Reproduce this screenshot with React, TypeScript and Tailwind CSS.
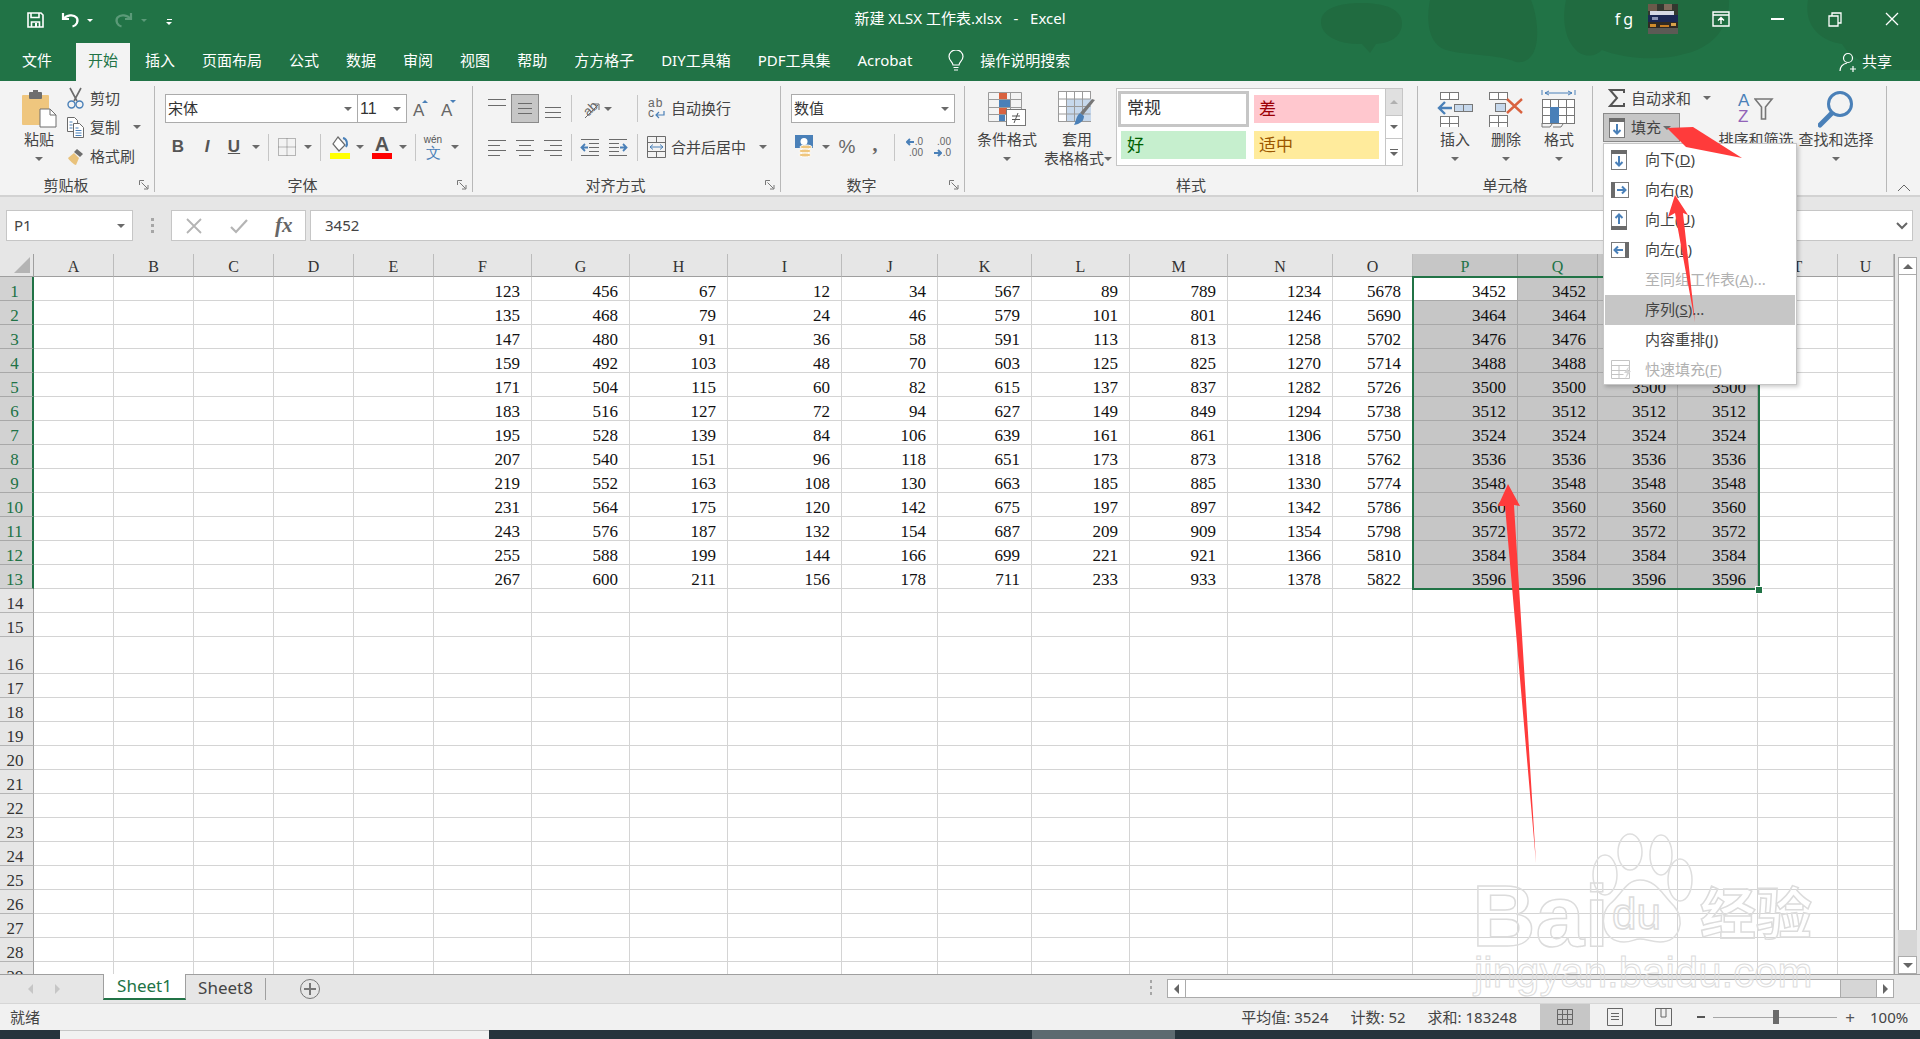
import type { ReactNode } from 'react'

const gridCols =
  'grid grid-cols-[34px_80px_80px_80px_80px_80px_98px_98px_98px_114px_96px_94px_98px_98px_105px_80px_105px_80px_80px_80px_80px_56px]'
const letters = 'ABCDEFGHIJKLMNOPQRSTU'.split('')
const bases = [123, 456, 67, 12, 34, 567, 89, 789, 1234, 5678, 3452, 3452, 3452, 3452]
const rows = Array.from({ length: 29 }, (_, i) => i + 1)
const tabs = ['插入', '页面布局', '公式', '数据', '审阅', '视图', '帮助', '方方格子', 'DIY工具箱', 'PDF工具集', 'Acrobat']

const blue = '#4a80b8'
const gray = '#6b6b6b'

function Caret({ className = '' }: { className?: string }) {
  return <div className={`w-[8px] flex justify-center shrink-0 ${className}`}><div className="w-0 h-0 border-x-[4px] border-t-[4px] border-x-transparent border-t-[#6a6a6a]" /></div>
}

function Sep({ className = '' }: { className?: string }) {
  return <div className={`w-px h-[27px] bg-[#c6c6c6] shrink-0 ${className}`} />
}

function Group({ width, label, launcher, children }: { width: string; label?: string; launcher?: boolean; children: ReactNode }) {
  return (
    <div className={`${width} h-[106px] mt-[5px] shrink-0 border-r border-[#b8b8b8] flex flex-col`}>
      <div className="h-[91px] shrink-0">{children}</div>
      <div className="flex items-center h-[16px] text-[15px] leading-[16px]">
        <span className="flex-1 text-center">{label}</span>
        {launcher && (
          <div className="w-[22px] flex justify-end pr-[5px]">
            <svg width="10" height="10" viewBox="0 0 10 10" fill="none" stroke="#777">
              <path d="M.5 5V.5H5M2.5 2.5l6 6M9 5v4H5" />
            </svg>
          </div>
        )}
      </div>
    </div>
  )
}

function LargeButton({ width, className = '', icon, label, caret = true }: { width: string; className?: string; icon: ReactNode; label: string; caret?: boolean }) {
  return (
    <div className={`${width} ${className} flex flex-col items-center shrink-0`}>
      <div className="h-[37px] mt-[4px] flex items-center justify-center">{icon}</div>
      <div className="mt-[2px] h-[20px] leading-[20px] text-[15px] whitespace-nowrap">{label}</div>
      {caret && <Caret className="mt-[8px]" />}
    </div>
  )
}

function Lines({ l, h = 29 }: { l: number[][]; h?: number }) {
  return (
    <svg width="20" height={h} viewBox={`0 0 20 ${h}`} stroke={gray} className="shrink-0">
      {l.map((p, i) => <path key={i} d={`M${p[0]} ${p[2]}.5H${p[1]}`} />)}
    </svg>
  )
}

function Blobs({ className }: { className: string }) {
  return (
    <svg width="640" height="81" viewBox="0 0 640 81" fill="#206b40" className={`absolute right-0 ${className}`}>
      <path d="M41 22C41 8 60 3 82 3s40 6 40 20-12 20-26 21l-6 9-8-9c-22 1-41-8-41-22z" />
      <path d="M150 0c-4 20-2 44 16 50 22 6 52 4 70 12 12 2 20-8 21-24 1-14-2-28-6-38z" />
      <path d="M286 0c-4 18-2 40 12 52 10 6 18 4 24-2 20 8 56 12 82 4 28-6 46-26 45-54z" />
      <path d="M528 0c-4 24 10 40 34 44 10 16 30 24 50 26h28V0z" />
    </svg>
  )
}

function Save() {
  return (
    <svg width="17" height="16" viewBox="0 0 17 16" fill="none" stroke="#fff" strokeWidth="1.6">
      <path d="M1 1h13l2 2v12H1z" />
      <path d="M4 1v4.500h8V1" />
      <path d="M4.500 15v-5h8v5" />
      <path d="M9 11v4" strokeWidth="2" />
    </svg>
  )
}

function Undo({ faded }: { faded?: boolean }) {
  return (
    <svg width="20" height="18" viewBox="0 0 20 18" fill="none" stroke={faded ? '#5b9a78' : '#fff'} strokeWidth="2.2" className={faded ? '-scale-x-100' : ''}>
      <path d="M2 2v6h6" />
      <path d="M2.500 8c3-4 10-5 13-1.500 2.500 3.500 0 8-4 9" />
    </svg>
  )
}

function Paste() {
  return (
    <svg width="36" height="38" viewBox="0 0 36 38">
      <rect x="1" y="5" width="27" height="30" rx="1" fill="#efc67e" />
      <rect x="8" y="2" width="13" height="7" rx="1" fill="#6e6e6e" />
      <rect x="12" y="0" width="5" height="4" fill="#6e6e6e" />
      <path d="M19 19h10l6 6v12H19z" fill="#fff" stroke="#6e6e6e" />
      <path d="M29 19v6h6" fill="none" stroke="#6e6e6e" />
    </svg>
  )
}

function Scissors() {
  return (
    <svg width="17" height="22" viewBox="0 0 17 22" fill="none">
      <path d="M3 1l7 13M14 1L7 14" stroke="#6b6b6b" strokeWidth="1.6" />
      <circle cx="4.500" cy="17.500" r="3.500" stroke={blue} strokeWidth="1.400" />
      <circle cx="12.500" cy="17.500" r="3.500" stroke={blue} strokeWidth="1.400" />
    </svg>
  )
}

function CopyIcon() {
  return (
    <svg width="17" height="21" viewBox="0 0 17 21" fill="#fff" stroke="#6b6b6b">
      <path d="M.5.500h7l3 3v11H.500z" />
      <path d="M6.500 6.500h6l4 4v10h-10z" />
      <path d="M2.500 5h3M2.500 8h3M2.500 11h3M8.500 11h3M8.500 13.500h6M8.500 16h6M8.500 18.500h6" stroke={blue} />
    </svg>
  )
}

function Brush() {
  return (
    <svg width="18" height="19" viewBox="0 0 18 19">
      <path d="M10 2l6 5-3 3-6-5z" fill="#6e6e6e" />
      <path d="M7 6l5 5-3 7c-2 0-7-5-8-7z" fill="#e9c27b" />
    </svg>
  )
}

function AGrow({ down }: { down?: boolean }) {
  return (
    <div className="flex items-start w-[20px] h-[20px]">
      <span className="text-[17px] leading-[20px] font-['Liberation_Sans',sans-serif] text-[#666] ml-[2px] mt-[2px]">A</span>
      <div className={down ? 'w-0 h-0 border-x-[3px] border-t-[3px] border-x-transparent border-t-[#4a80b8] mt-[1px] -ml-[2px]' : 'w-0 h-0 border-x-[3px] border-b-[3px] border-x-transparent border-b-[#4a80b8] mt-[1px] -ml-[2px]'} />
    </div>
  )
}

function BorderIcon() {
  return (
    <svg width="18" height="18" viewBox="0 0 18 18" fill="none" stroke="#777" strokeDasharray="1 1">
      <path d="M.5.500h17v17H.500zM9 .500v17M.500 9h17" />
    </svg>
  )
}

function FillIcon() {
  return (
    <svg width="22" height="24" viewBox="0 0 22 24">
      <path d="M9 2l7 8-6 6-6-7z" fill="#fff" stroke="#6b6b6b" strokeWidth="1.200" />
      <path d="M14 3c4 1 5 6 3 9" fill="none" stroke={blue} strokeWidth="2" />
      <rect x="1" y="18" width="20" height="6" fill="#ffff00" />
    </svg>
  )
}

function FontColor() {
  return (
    <div className="flex flex-col items-center w-[22px]">
      <span className="text-[20px] leading-[18px] font-['Liberation_Sans',sans-serif] font-bold text-[#555]">A</span>
      <div className="w-[20px] h-[6px] bg-[#ff0000]" />
    </div>
  )
}

function Wen() {
  return (
    <div className="flex flex-col items-center w-[24px] leading-none">
      <span className="text-[10px] text-[#555] leading-[10px]">wén</span>
      <span className="text-[15px] text-[#4a80b8] leading-[15px]">文</span>
    </div>
  )
}

function Orientation() {
  return (
    <div className="w-[22px] h-[24px] relative flex items-center justify-center">
      <span className="text-[13px] text-[#666] -rotate-45 font-['Liberation_Sans',sans-serif] leading-none">ab</span>
      <svg width="22" height="24" viewBox="0 0 22 24" fill="none" stroke={gray} className="absolute inset-0"><path d="M6 21L19 8M14 7h6v6" /></svg>
    </div>
  )
}

function WrapIcon() {
  return (
    <div className="w-[17px] h-[22px] relative leading-[10px] text-[12px] text-[#666] font-['Liberation_Sans',sans-serif]">
      <div className="tracking-[1px]">ab</div>
      <div>c</div>
      <svg width="10" height="8" viewBox="0 0 10 8" fill="none" stroke={blue} strokeWidth="1.200" className="absolute right-0 bottom-[1px]"><path d="M9 0v4H1M4 1L1 4l3 3" /></svg>
    </div>
  )
}

function MergeIcon() {
  return (
    <svg width="19" height="22" viewBox="0 0 19 22" fill="none" stroke={gray}>
      <path d="M.5.500h18v21H.500zM.500 6.500h18M.500 15.500h18M9.500.500v6M9.500 15.500v6" />
      <path d="M3 11h13M6 8.500L3 11l3 2.500M13 8.500l3 2.500-3 2.500" stroke={blue} />
    </svg>
  )
}

function Indent({ flip }: { flip?: boolean }) {
  return (
    <svg width="20" height="20" viewBox="0 0 20 20" fill="none" className={flip ? '-scale-x-100' : ''}>
      <path d="M1 2.500h18M9 6.500h10M9 10.500h10M9 14.500h10M1 18.500h18" stroke={gray} />
      <path d="M8 10.500H2M5 7l-3.500 3.500L5 14" stroke={blue} strokeWidth="1.800" />
    </svg>
  )
}

function Accounting() {
  return (
    <svg width="18" height="24" viewBox="0 0 18 24">
      <rect x="0" y="0" width="18" height="13" fill={blue} />
      <circle cx="9" cy="6.500" r="3.500" fill="#fff" />
      <ellipse cx="11" cy="12" rx="6" ry="2" fill="#efc67e" stroke="#fff" />
      <ellipse cx="10" cy="16" rx="6" ry="2" fill="#efc67e" stroke="#fff" />
      <ellipse cx="10" cy="20" rx="6" ry="2" fill="#efc67e" stroke="#fff" />
    </svg>
  )
}

function Decimal({ more }: { more?: boolean }) {
  const top = more ? '.00' : '.0'
  const bottom = more ? '.0' : '.00'
  return (
    <div className="w-[20px] text-[10px] leading-[11px] text-[#666] font-['Liberation_Sans',sans-serif]">
      <div className="flex justify-end items-center gap-[1px]">
        {!more && <svg width="8" height="8" viewBox="0 0 8 8" fill="none" stroke={blue} strokeWidth="2"><path d="M8 4H1M4 1L1 4l3 3" /></svg>}
        {top}
      </div>
      <div className="flex justify-end items-center gap-[1px]">
        {more && <svg width="8" height="8" viewBox="0 0 8 8" fill="none" stroke={blue} strokeWidth="2"><path d="M0 4h7M4 1l3 3-3 3" /></svg>}
        {bottom}
      </div>
    </div>
  )
}

function CondFormat() {
  return (
    <svg width="38" height="34" viewBox="0 0 38 34" fill="none">
      <path d="M.5.500h33v29H.500zM.500 7.500h33M.500 15.500h33M.500 22.500h33M11.500.500v29M22.500.500v29" stroke="#9a9a9a" />
      <rect x="11" y="1" width="8" height="6" fill="#d9623f" />
      <rect x="11" y="8" width="11" height="7" fill={blue} />
      <rect x="11" y="16" width="8" height="6" fill="#d9623f" />
      <rect x="11" y="23" width="6" height="6" fill={blue} />
      <rect x="18.500" y="17.500" width="19" height="16" fill="#fff" stroke="#777" />
      <path d="M24 24h8M24 27.500h8M30 21l-4 10" stroke="#555" />
    </svg>
  )
}

function TableFormat() {
  return (
    <svg width="38" height="36" viewBox="0 0 38 36" fill="none">
      <rect x=".5" y=".5" width="32" height="30" fill="#fff" stroke="#9a9a9a" />
      <rect x="8" y="8" width="25" height="22" fill="#c6d8ec" />
      <path d="M.500 8h32M.500 15.500h32M.500 23h32M8.500.500v30M16.500.500v30M24.500.500v30" stroke="#9a9a9a" />
      <path d="M37 9l-12 15-3-2 12-14z" fill="#777" />
      <path d="M22 22l4 3c0 5-4 8-10 9 2-3 2-9 6-12z" fill={blue} />
    </svg>
  )
}

function Cells({ x, y, c = 2, r = 2, w = 9, h = 7 }: { x: number; y: number; c?: number; r?: number; w?: number; h?: number }) {
  const parts = []
  for (let i = 0; i < c; i++) for (let j = 0; j < r; j++) parts.push(<rect key={`${i}-${j}`} x={x + i * w + 0.5} y={y + j * h + 0.5} width={w} height={h} fill="#fff" stroke="#777" />)
  return <>{parts}</>
}

function InsertIcon() {
  return (
    <svg width="37" height="36" viewBox="0 0 37 36" fill="none">
      <Cells x={3} y={1} r={1} />
      <Cells x={3} y={25} />
      <rect x="17.500" y="13.500" width="9" height="7" fill="#c6d8ec" stroke="#777" />
      <rect x="26.500" y="13.500" width="9" height="7" fill="#c6d8ec" stroke="#777" />
      <path d="M15 17H2M8 11l-6 6 6 6" stroke={blue} strokeWidth="2.400" />
    </svg>
  )
}

function DeleteIcon() {
  return (
    <svg width="37" height="36" viewBox="0 0 37 36" fill="none">
      <Cells x={1} y={1} r={1} />
      <Cells x={1} y={24} />
      <rect x="7.500" y="12.500" width="10" height="8" fill="#c6d8ec" stroke="#777" />
      <path d="M19 8l15 14M34 8L19 22" stroke="#d9623f" strokeWidth="2.400" />
    </svg>
  )
}

function FormatIcon() {
  return (
    <svg width="36" height="38" viewBox="0 0 36 38" fill="none">
      <path d="M1 0v5M34 0v5M4 3h27M8 1L4 3l4 2M27 1l4 2-4 2" stroke={blue} />
      <Cells x={1} y={9} c={4} r={3} w={8} h={8} />
      <rect x="9" y="17" width="9" height="16" fill={blue} />
      <path d="M1 33v4h8l2-3M12 37h8l2-3" stroke="#777" />
    </svg>
  )
}

function Sigma() {
  return (
    <svg width="17" height="18" viewBox="0 0 17 18" fill="none" stroke="#555" strokeWidth="2">
      <path d="M16 4V1H2l7 8-7 8h14v-3" />
    </svg>
  )
}

function FillArrow({ dir }: { dir: 'down' | 'right' | 'up' | 'left' }) {
  if (dir === 'down') return (
    <svg width="16" height="20" viewBox="0 0 16 20" fill="#fff"><rect x=".5" y=".5" width="15" height="19" stroke="#7a7a7a" /><rect width="16" height="4" fill="#6b6b6b" /><path d="M8 6v10M4.500 12L8 15.500l3.500-3.500" fill="none" stroke={blue} strokeWidth="2" /></svg>
  )
  if (dir === 'up') return (
    <svg width="16" height="20" viewBox="0 0 16 20" fill="#fff"><rect x=".5" y=".5" width="15" height="19" stroke="#7a7a7a" /><rect y="16" width="16" height="4" fill="#6b6b6b" /><path d="M8 14V4M4.500 8L8 4.500 11.500 8" fill="none" stroke={blue} strokeWidth="2" /></svg>
  )
  if (dir === 'right') return (
    <svg width="18" height="16" viewBox="0 0 18 16" fill="#fff"><rect x=".5" y=".5" width="17" height="15" stroke="#7a7a7a" /><rect width="4" height="16" fill="#6b6b6b" /><path d="M6 8h9M11 4.500L14.500 8 11 11.500" fill="none" stroke={blue} strokeWidth="2" /></svg>
  )
  return (
    <svg width="18" height="16" viewBox="0 0 18 16" fill="#fff"><rect x=".5" y=".5" width="17" height="15" stroke="#7a7a7a" /><rect x="14" width="4" height="16" fill="#6b6b6b" /><path d="M12 8H3M7 4.500L3.500 8 7 11.500" fill="none" stroke={blue} strokeWidth="2" /></svg>
  )
}

function SortIcon() {
  return (
    <div className="flex w-[36px] h-[34px] items-center">
      <div className="w-[14px] font-['Liberation_Sans',sans-serif] text-[17px] leading-[16px]">
        <div className="text-[#4a80b8]">A</div>
        <div className="text-[#9163b8]">Z</div>
      </div>
      <svg width="20" height="22" viewBox="0 0 20 22" fill="none" stroke="#777" strokeWidth="1.600" className="ml-[2px]"><path d="M1 1h17l-6.500 8v12h-4V9z" /></svg>
    </div>
  )
}

function SearchIcon() {
  return (
    <svg width="36" height="38" viewBox="0 0 36 38" fill="none" stroke={blue}>
      <circle cx="22" cy="14" r="11.500" strokeWidth="3" />
      <path d="M13 24L2 35" strokeWidth="5" strokeLinecap="round" />
    </svg>
  )
}

function FlashFill() {
  return (
    <svg width="22" height="20" viewBox="0 0 22 20" fill="none" stroke="#c4c4c4">
      <path d="M.500.500h18v18H.500zM.500 5.500h18M.500 10.500h18M.500 14.500h12M8 5v14" />
      <path d="M18 6l-5 7h3l-2 6 6-8h-3z" fill="#d6d6d6" stroke="none" />
    </svg>
  )
}

function Avatar() {
  return (
    <svg width="30" height="30" viewBox="0 0 30 30">
      <rect width="30" height="30" fill="#33382f" />
      <rect x="0" y="0" width="9" height="7" fill="#6a5a4a" />
      <rect x="16" y="0" width="8" height="6" fill="#7d6a5a" />
      <rect x="2" y="7" width="24" height="4" fill="#d6dae4" />
      <rect x="0" y="11" width="30" height="7" fill="#1b2852" />
      <rect x="4" y="13" width="6" height="3" fill="#8a94b4" />
      <rect x="0" y="18" width="30" height="6" fill="#2f2a24" />
      <rect x="2" y="20" width="6" height="3" fill="#d08c2c" />
      <rect x="12" y="21" width="9" height="2" fill="#c97f24" />
      <rect x="23" y="19" width="5" height="3" fill="#d6a24a" />
      <rect x="0" y="24" width="30" height="6" fill="#5c5a55" />
    </svg>
  )
}

function Cell({ col, row }: { col: number; row: number }) {
  const selected = row <= 13 && col >= 15 && col <= 18
  const active = row === 1 && col === 15
  const value = row <= 13 && col >= 5 && col <= 18 ? bases[col - 5] + (row - 1) * 12 : null
  const cls = active
    ? 'bg-white border-[#a8a8a8]'
    : selected
      ? 'bg-[#c6c6c6] border-[#a8a8a8]'
      : 'bg-white border-[#d4d4d4]'
  return (
    <div className={`${cls} border-r border-b flex items-end justify-end pr-[11px] text-[17px] leading-[17px] text-[#111] font-['Liberation_Serif','Noto_Sans_CJK_SC',serif] overflow-hidden`}>
      {value}
    </div>
  )
}

function Sheet() {
  return (
    <div className="w-[1894px] h-[720px] relative overflow-hidden shrink-0">
      <div className={`${gridCols} h-[23px]`}>
        <div className="bg-[#e6e6e6] border-r border-b border-[#9f9f9f] flex items-end justify-end pr-[3px] pb-[3px]">
          <svg width="16" height="16" viewBox="0 0 16 16"><path d="M16 0v16H0z" fill="#b4b4b4" /></svg>
        </div>
        {letters.map((l, i) => (
          <div
            key={l}
            className={
              i >= 15 && i <= 18
                ? "bg-[#c6c6c6] border-r border-b border-[#a8a8a8] text-center text-[#217346] text-[16px] pt-[3px] leading-[19px] font-['Liberation_Serif',serif]"
                : "bg-[#e6e6e6] border-r border-b border-r-[#bcbcbc] border-b-[#9f9f9f] text-center text-[#333] text-[16px] pt-[3px] leading-[19px] font-['Liberation_Serif',serif]"
            }
          >
            {l}
          </div>
        ))}
      </div>
      {rows.map(r => (
        <div key={r} className={`${gridCols} ${r === 16 ? 'h-[37px]' : 'h-[24px]'}`}>
          <div
            className={
              r <= 13
                ? "bg-[#d2d2d2] border-b border-b-[#a8a8a8] border-r-2 border-r-[#217346] flex items-end justify-center pr-[3px] text-[#217346] text-[17px] leading-[17px] font-['Liberation_Serif',serif]"
                : "bg-[#e6e6e6] border-b border-b-[#b4b4b4] border-r border-r-[#9f9f9f] flex items-end justify-center pr-[3px] text-[#333] text-[17px] leading-[17px] font-['Liberation_Serif',serif]"
            }
          >
            {r}
          </div>
          {letters.map((_, c) => <Cell key={c} col={c} row={r} />)}
        </div>
      ))}
      <div className="absolute left-[1412px] top-[22px] w-[348px] h-[314px] border-[2.5px] border-[#217346]" />
      <div className="absolute left-[1755px] top-[332px] w-[8px] h-[8px] bg-[#217346] border border-white" />
    </div>
  )
}

function FillMenu() {
  const items: { pre: string; key: string; post: string; icon?: ReactNode; disabled?: boolean; active?: boolean }[] = [
    { pre: '向下(', key: 'D', post: ')', icon: <FillArrow dir="down" /> },
    { pre: '向右(', key: 'R', post: ')', icon: <FillArrow dir="right" /> },
    { pre: '向上(', key: 'U', post: ')', icon: <FillArrow dir="up" /> },
    { pre: '向左(', key: 'L', post: ')', icon: <FillArrow dir="left" /> },
    { pre: '至同组工作表(', key: 'A', post: ')...', disabled: true },
    { pre: '序列(', key: 'S', post: ')...', active: true },
    { pre: '内容重排(', key: 'J', post: ')' },
    { pre: '快速填充(', key: 'F', post: ')', icon: <FlashFill />, disabled: true },
  ]
  return (
    <div className="absolute left-[1603px] top-[143px] w-[194px] h-[242px] bg-white border border-[#c6c6c6] shadow-[2px_2px_4px_rgba(0,0,0,0.2)] p-[1px]">
      {items.map(it => (
        <div
          key={it.pre}
          className={`h-[30px] flex items-center text-[15px] ${it.active ? 'bg-[#c6c6c6]' : ''} ${it.disabled ? 'text-[#b1b1b1]' : 'text-[#444]'}`}
        >
          <div className="w-[40px] pl-[6px] shrink-0">{it.icon}</div>
          <span className="whitespace-nowrap -mt-[2px]">{it.pre}<span className="underline">{it.key}</span>{it.post}</span>
        </div>
      ))}
    </div>
  )
}

function Watermark() {
  const stroke = "absolute leading-none text-transparent font-['Liberation_Sans',sans-serif] [-webkit-text-stroke:1.5px_#dcdcdc]"
  return (
    <>
      <div className={`${stroke} left-[1472px] top-[872px] text-[88px] font-bold`}>Bai</div>
      <div className={`${stroke} left-[1612px] top-[892px] text-[44px]`}>du</div>
      <div className="absolute left-[1700px] top-[882px] text-[56px] leading-none text-transparent font-['Noto_Sans_CJK_SC',sans-serif] font-bold [-webkit-text-stroke:1.5px_#dcdcdc] whitespace-nowrap">经验</div>
      <div className={`${stroke} left-[1474px] top-[952px] text-[42px] whitespace-nowrap [-webkit-text-stroke:1px_#dcdcdc]`}>jingyan.baidu.com</div>
    </>
  )
}

function Overlay() {
  return (
    <svg width="1920" height="1039" viewBox="0 0 1920 1039" className="absolute inset-0 pointer-events-none">
      <g fill="none" stroke="#dedede" strokeWidth="1.500">
        <ellipse cx="1630" cy="852" rx="12" ry="18" />
        <ellipse cx="1661" cy="855" rx="11" ry="20" />
        <ellipse cx="1605" cy="875" rx="12" ry="20" />
        <ellipse cx="1680" cy="880" rx="12" ry="21" />
        <path d="M1640 880c-14 0-18 14-30 24-12 12-8 38 14 38 8 0 10-3 16-3s12 3 20 3c20 0 26-22 14-36-12-12-18-26-34-26z" />
      </g>
      <path d="M1508 484l12 22-6-1 22 358-31-357-7 0z" fill="#ff3b3b" />
    </svg>
  )
}

export default function App() {
  return (
    <div className="relative w-[1920px] h-[1039px] overflow-hidden bg-white flex flex-col text-[#444] font-['Noto_Sans','Noto_Sans_CJK_SC',sans-serif]">
      {/* title bar */}
      <div className="h-[43px] shrink-0 bg-[#217346] text-white grid grid-cols-[1fr_auto_1fr] items-start relative overflow-hidden">
        <Blobs className="top-0" />
        <div className="flex items-center h-[40px] pl-[27px] relative">
          <Save />
          <div className="ml-[17px]"><Undo /></div>
          <div className="ml-[6px] w-0 h-0 border-x-[3px] border-t-[3px] border-x-transparent border-t-white" />
          <div className="ml-[20px]"><Undo faded /></div>
          <div className="ml-[8px] w-0 h-0 border-x-[3px] border-t-[3px] border-x-transparent border-t-[#5b9a78]" />
          <div className="ml-[19px] mt-[4px] flex flex-col items-center gap-[2px]">
            <div className="w-[5px] h-px bg-white" />
            <div className="w-0 h-0 border-x-[3px] border-t-[3px] border-x-transparent border-t-white" />
          </div>
        </div>
        <div className="text-[15px] leading-[36px] whitespace-pre relative">新建 XLSX 工作表.xlsx   -   Excel</div>
        <div className="flex items-center justify-end h-[38px] relative">
          <span className="text-[16px] tracking-[3px] mr-[12px]">fg</span>
          <div className="w-[30px] h-[30px] overflow-hidden"><Avatar /></div>
          <div className="ml-[14px] w-[57px] flex justify-center">
            <svg width="18" height="16" viewBox="0 0 18 16" fill="none" stroke="#fff" strokeWidth="1.400"><path d="M1 1h16v14H1zM1 4h16M9 13V7M6 9.500L9 6.500l3 3" /></svg>
          </div>
          <div className="w-[57px] flex justify-center"><div className="w-[13px] h-[1.500px] bg-white" /></div>
          <div className="w-[57px] flex justify-center">
            <svg width="14" height="15" viewBox="0 0 14 15" fill="none" stroke="#fff" strokeWidth="1.300"><path d="M1 4h9v10H1zM4 4V1h9v10h-3" /></svg>
          </div>
          <div className="w-[57px] flex justify-center">
            <svg width="14" height="14" viewBox="0 0 14 14" stroke="#fff" strokeWidth="1.300"><path d="M1 1l12 12M13 1L1 13" /></svg>
          </div>
        </div>
      </div>
      {/* tabs */}
      <div className="h-[38px] shrink-0 bg-[#217346] text-white flex items-stretch text-[15px] leading-[35px] pl-[22px] gap-[27px] whitespace-nowrap relative overflow-hidden">
        <Blobs className="-top-[43px]" />
        <span>文件</span>
        <span className="ml-[-3px] mr-[-12px] px-[12px] bg-[#f3f3f3] text-[#217346]">开始</span>
        {tabs.map(t => <span key={t}>{t}</span>)}
        <div className="flex items-center ml-[9px] gap-[16px] pb-[3px]">
          <svg width="16" height="22" viewBox="0 0 16 22" fill="none" stroke="#fff" strokeWidth="1.200"><path d="M5 15c0-3-4-4-4-8.500a7 6.500 0 0 1 14 0C15 11 11 12 11 15zM5.500 17.500h5M6 20h4" /></svg>
          <span>操作说明搜索</span>
        </div>
        <div className="ml-auto mr-[28px] flex items-center gap-[3px] pb-[1px] relative">
          <svg width="20" height="20" viewBox="0 0 20 20" fill="none" stroke="#fff" strokeWidth="1.200"><circle cx="9" cy="6" r="4.500" /><path d="M1 19c0-4 3-7 7-8M14 14v6M11 17h6" /></svg>
          <span>共享</span>
        </div>
      </div>
      {/* ribbon */}
      <div className="h-[116px] shrink-0 bg-[#f3f3f3] border-b-2 border-[#d2d2d2] flex">
        <Group width="w-[155px]" label="剪贴板" launcher>
          <div className="flex pl-[20px]">
            <LargeButton width="w-[38px]" icon={<Paste />} label="粘贴" />
            <div className="ml-[9px] text-[15px]">
              <div className="h-[24px] flex items-center"><div className="w-[17px]"><Scissors /></div><span className="ml-[6px]">剪切</span></div>
              <div className="h-[24px] mt-[5px] flex items-center"><div className="w-[17px]"><CopyIcon /></div><span className="ml-[6px]">复制</span><Caret className="ml-[13px]" /></div>
              <div className="h-[24px] mt-[5px] flex items-center"><div className="w-[17px]"><Brush /></div><span className="ml-[6px]">格式刷</span></div>
            </div>
          </div>
        </Group>
        <Group width="w-[318px]" label="字体" launcher>
          <div className="flex items-center h-[29px] mt-[8px] ml-[10px] text-[15px]">
            <div className="w-[193px] h-[29px] bg-white border border-[#ababab] flex items-center justify-between pl-[2px] pr-[5px] text-[#333]">宋体<Caret /></div>
            <div className="w-[50px] h-[29px] -ml-px bg-white border border-[#ababab] flex items-center justify-between pl-[2px] pr-[5px] font-['Liberation_Sans',sans-serif] text-[16px] text-[#333]">11<Caret /></div>
            <div className="w-[28px] flex justify-center"><AGrow /></div>
            <div className="w-[28px] flex justify-center"><AGrow down /></div>
          </div>
          <div className="flex items-center h-[28px] mt-[10px] text-[#555] font-['Liberation_Sans',sans-serif] text-[17px]">
            <div className="ml-[12px] w-[22px] text-center font-bold">B</div>
            <div className="ml-[7px] w-[22px] text-center italic font-bold">I</div>
            <div className="ml-[5px] w-[22px] text-center underline font-bold">U</div>
            <Caret className="ml-[7px]" />
            <Sep className="ml-[8px]" />
            <div className="ml-[9px] w-[18px]"><BorderIcon /></div>
            <Caret className="ml-[8px]" />
            <Sep className="ml-[8px]" />
            <div className="ml-[8px] w-[22px]"><FillIcon /></div>
            <Caret className="ml-[5px]" />
            <div className="ml-[7px]"><FontColor /></div>
            <Caret className="ml-[6px]" />
            <Sep className="ml-[8px]" />
            <div className="ml-[5px]"><Wen /></div>
            <Caret className="ml-[6px]" />
          </div>
        </Group>
        <Group width="w-[308px]" label="对齐方式" launcher>
          <div className="flex items-center h-[29px] mt-[8px] text-[15px]">
            <div className="ml-[14px]"><Lines l={[[1, 19, 5], [1, 19, 11]]} /></div>
            <div className="ml-[4px] w-[28px] h-[29px] bg-[#c6c6c6] border border-[#8a8a8a] flex justify-center"><Lines h={27} l={[[3, 17, 8], [3, 17, 13], [3, 17, 18]]} /></div>
            <div className="ml-[4px]"><Lines l={[[2, 18, 13], [2, 18, 18], [2, 18, 23]]} /></div>
            <Sep className="ml-[8px]" />
            <div className="ml-[7px]"><Orientation /></div>
            <Caret className="ml-[3px]" />
            <Sep className="ml-[25px]" />
            <div className="ml-[10px]"><WrapIcon /></div>
            <span className="ml-[6px] whitespace-nowrap">自动换行</span>
          </div>
          <div className="flex items-center h-[28px] mt-[10px] text-[15px]">
            <div className="ml-[14px]"><Lines h={20} l={[[1, 19, 3], [1, 13, 8], [1, 19, 13], [1, 13, 18]]} /></div>
            <div className="ml-[8px]"><Lines h={20} l={[[1, 19, 3], [4, 16, 8], [1, 19, 13], [4, 16, 18]]} /></div>
            <div className="ml-[8px]"><Lines h={20} l={[[1, 19, 3], [7, 19, 8], [1, 19, 13], [7, 19, 18]]} /></div>
            <Sep className="ml-[8px]" />
            <div className="ml-[8px]"><Indent /></div>
            <div className="ml-[8px]"><Indent flip /></div>
            <Sep className="ml-[9px]" />
            <div className="ml-[9px]"><MergeIcon /></div>
            <span className="ml-[5px] whitespace-nowrap">合并后居中</span>
            <Caret className="ml-[13px]" />
          </div>
        </Group>
        <Group width="w-[184px]" label="数字" launcher>
          <div className="h-[29px] mt-[8px] ml-[10px] w-[164px] bg-white border border-[#ababab] flex items-center justify-between pl-[2px] pr-[5px] text-[15px] text-[#333]">数值<Caret /></div>
          <div className="flex items-center h-[28px] mt-[10px]">
            <div className="ml-[14px]"><Accounting /></div>
            <Caret className="ml-[9px]" />
            <div className="ml-[7px] w-[20px] text-center text-[19px] text-[#666] font-['Liberation_Sans',sans-serif]">%</div>
            <div className="ml-[12px] w-[12px] text-center text-[20px] font-bold text-[#666] font-['Liberation_Serif',serif] -mt-[6px]">,</div>
            <Sep className="ml-[13px]" />
            <div className="ml-[8px]"><Decimal /></div>
            <div className="ml-[8px]"><Decimal more /></div>
          </div>
        </Group>
        <Group width="w-[453px]" label="样式">
          <div className="flex items-start">
            <LargeButton width="w-[62px]" className="ml-[11px]" icon={<CondFormat />} label="条件格式" />
            <div className="w-[74px] ml-[2px] flex flex-col items-center shrink-0">
              <div className="h-[37px] mt-[4px] flex items-center"><TableFormat /></div>
              <div className="mt-[2px] h-[20px] leading-[20px] text-[15px]">套用</div>
              <div className="h-[19px] leading-[19px] text-[15px] flex items-center whitespace-nowrap">表格格式<Caret className="-mr-[2px]" /></div>
            </div>
            <div className="ml-[2px] mt-[2px] w-[287px] h-[78px] bg-white border border-[#c6c6c6] flex text-[17px]">
              <div className="w-[268px] pl-[1px] pt-[2px]">
                <div className="flex items-center h-[36px]">
                  <div className="w-[131px] h-[36px] border-[3px] border-[#c6c6c6] pl-[6px] leading-[28px] text-[#333]">常规</div>
                  <div className="ml-[5px] w-[125px] h-[28px] bg-[#ffc7ce] text-[#9c0006] pl-[5px] leading-[28px]">差</div>
                </div>
                <div className="flex items-center mt-[4px]">
                  <div className="ml-[3px] w-[125px] h-[28px] bg-[#c6efce] text-[#006100] pl-[6px] leading-[28px]">好</div>
                  <div className="ml-[8px] w-[125px] h-[28px] bg-[#ffeb9c] text-[#9c5700] pl-[5px] leading-[28px]">适中</div>
                </div>
              </div>
              <div className="w-[17px] border-l border-[#c6c6c6] flex flex-col">
                <div className="h-[26px] bg-[#e0e0e0] flex items-center justify-center"><div className="w-0 h-0 border-x-[4px] border-b-[4px] border-x-transparent border-b-[#b0b0b0]" /></div>
                <div className="h-[24px] border-y border-[#c6c6c6] flex items-center justify-center"><div className="w-0 h-0 border-x-[4px] border-t-[4px] border-x-transparent border-t-[#666]" /></div>
                <div className="flex-1 flex flex-col items-center justify-center gap-[2px]"><div className="w-[8px] h-px bg-[#666]" /><div className="w-0 h-0 border-x-[4px] border-t-[4px] border-x-transparent border-t-[#666]" /></div>
              </div>
            </div>
          </div>
        </Group>
        <Group width="w-[175px]" label="单元格">
          <div className="flex">
            <LargeButton width="w-[50px]" className="ml-[12px]" icon={<InsertIcon />} label="插入" />
            <LargeButton width="w-[50px]" className="ml-[1px]" icon={<DeleteIcon />} label="删除" />
            <LargeButton width="w-[50px]" className="ml-[3px]" icon={<FormatIcon />} label="格式" />
          </div>
        </Group>
        <Group width="w-[294px]">
          <div className="flex">
            <div className="w-[125px] pl-[10px] shrink-0 text-[15px]">
              <div className="h-[24px] flex items-center pl-[5px]">
                <Sigma /><span className="ml-[6px]">自动求和</span><Caret className="ml-[12px]" />
              </div>
              <div className="mt-[3px] h-[29px] w-[77px] bg-[#c6c6c6] border border-[#8a8a8a] flex items-center pl-[5px]">
                <div className="w-[16px]"><FillArrow dir="down" /></div>
                <span className="ml-[6px]">填充</span>
                <Caret className="ml-[2px]" />
              </div>
            </div>
            <LargeButton width="w-[76px]" icon={<SortIcon />} label="排序和筛选" caret={false} />
            <LargeButton width="w-[76px]" className="ml-[4px]" icon={<SearchIcon />} label="查找和选择" />
          </div>
        </Group>
        <div className="flex-1 flex items-end justify-center pb-[3px]">
          <svg width="14" height="8" viewBox="0 0 14 8" fill="none" stroke="#666"><path d="M1 7l6-6 6 6" /></svg>
        </div>
      </div>
      {/* formula bar */}
      <div className="h-[57px] shrink-0 bg-[#e6e6e6] flex items-start pt-[13px]">
        <div className="ml-[6px] w-[127px] h-[31px] bg-white border border-[#c6c6c6] flex items-center justify-between pl-[7px] pr-[7px] text-[15px] text-[#444]">P1<Caret /></div>
        <div className="ml-[17px] w-[4px] h-[31px] flex flex-col justify-center items-center gap-[3px]">
          <div className="w-[3px] h-[3px] bg-[#a6a6a6]" />
          <div className="w-[3px] h-[3px] bg-[#a6a6a6]" />
          <div className="w-[3px] h-[3px] bg-[#a6a6a6]" />
        </div>
        <div className="ml-[17px] w-[135px] h-[31px] bg-white border border-[#c6c6c6] flex items-center">
          <svg width="16" height="16" viewBox="0 0 16 16" stroke="#b4b4b4" strokeWidth="1.800" className="ml-[14px]"><path d="M1 1l14 14M15 1L1 15" /></svg>
          <svg width="18" height="16" viewBox="0 0 18 16" fill="none" stroke="#b4b4b4" strokeWidth="2.200" className="ml-[28px]"><path d="M1 9l5 5L17 2" /></svg>
          <span className="ml-[27px] text-[21px] italic font-bold text-[#666] font-['Liberation_Serif',serif] leading-none">fx</span>
        </div>
        <div className="ml-[4px] w-[1603px] h-[31px] bg-white border border-[#c6c6c6] flex items-center justify-between pl-[14px] pr-[4px] text-[15px] text-[#444]">
          3452
          <svg width="12" height="8" viewBox="0 0 12 8" fill="none" stroke="#666" strokeWidth="2"><path d="M1 1l5 5 5-5" /></svg>
        </div>
      </div>
      {/* grid + vertical scrollbar */}
      <div className="h-[720px] shrink-0 flex">
        <Sheet />
        <div className="flex-1 bg-[#e6e6e6] border-l border-[#9f9f9f] pl-[3px] pt-[3px] flex flex-col">
          <div className="w-[19px] h-[18px] bg-white border border-[#ababab] flex items-center justify-center"><div className="w-0 h-0 border-x-[5px] border-b-[5px] border-x-transparent border-b-[#666]" /></div>
          <div className="w-[19px] h-[655px] bg-white border-x border-[#ababab]" />
          <div className="w-[19px] h-[26px] bg-[#d6d6d6]" />
          <div className="w-[19px] h-[18px] bg-white border border-[#ababab] flex items-center justify-center"><div className="w-0 h-0 border-x-[5px] border-t-[5px] border-x-transparent border-t-[#666]" /></div>
        </div>
      </div>
      {/* sheet tabs */}
      <div className="h-[29px] shrink-0 bg-[#e6e6e6] border-t border-[#9f9f9f] flex items-start text-[17px]">
        <div className="w-[103px] h-[28px] flex items-center pl-[28px] gap-[22px]">
          <div className="w-0 h-0 border-y-[5px] border-r-[5px] border-y-transparent border-r-[#c6c6c6]" />
          <div className="w-0 h-0 border-y-[5px] border-l-[5px] border-y-transparent border-l-[#c6c6c6]" />
        </div>
        <div className="w-[83px] h-[26px] -mt-px bg-white border-x border-[#9f9f9f] border-b-2 border-b-[#217346] text-[#217346] text-center leading-[23px]">Sheet1</div>
        <div className="w-[80px] text-center leading-[20px] text-[#444] border-r border-[#9f9f9f] h-[22px] mt-[3px]">Sheet8</div>
        <div className="ml-[34px] mt-[4px] w-[20px] h-[20px] rounded-full border border-[#777] flex items-center justify-center">
          <svg width="12" height="12" viewBox="0 0 12 12" stroke="#777" strokeWidth="2"><path d="M6 0v12M0 6h12" /></svg>
        </div>
        <div className="ml-[830px] mt-[5px] flex flex-col gap-[3px]">
          <div className="w-[2px] h-[3px] bg-[#a6a6a6]" /><div className="w-[2px] h-[3px] bg-[#a6a6a6]" /><div className="w-[2px] h-[3px] bg-[#a6a6a6]" />
        </div>
        <div className="ml-[15px] mt-[4px] w-[727px] h-[19px] border border-[#ababab] bg-[#d6d6d6] flex">
          <div className="w-[18px] bg-white border-r border-[#ababab] flex items-center justify-center"><div className="w-0 h-0 border-y-[5px] border-r-[5px] border-y-transparent border-r-[#666]" /></div>
          <div className="w-[655px] bg-white border-r border-[#ababab]" />
          <div className="ml-auto w-[17px] bg-white border-l border-[#ababab] flex items-center justify-center"><div className="w-0 h-0 border-y-[5px] border-l-[5px] border-y-transparent border-l-[#666]" /></div>
        </div>
      </div>
      {/* status bar */}
      <div className="h-[27px] shrink-0 bg-[#f1f1f1] border-t border-[#d6d6d6] flex items-center text-[15px] text-[#444]">
        <span className="ml-[10px]">就绪</span>
        <div className="ml-auto flex items-center gap-[22px] whitespace-nowrap">
          <span>平均值: 3524</span><span>计数: 52</span><span>求和: 183248</span>
        </div>
        <div className="ml-[23px] w-[50px] h-[26px] bg-[#c6c6c6] flex items-center justify-center">
          <svg width="16" height="16" viewBox="0 0 16 16" fill="none" stroke="#666"><path d="M.500.500h15v15H.500zM5.500.500v15M10.500.500v15M.500 5.500h15M.500 10.500h15" /></svg>
        </div>
        <div className="w-[49px] flex justify-center">
          <svg width="16" height="18" viewBox="0 0 16 18" fill="none" stroke="#666"><path d="M.500.500h15v17H.500zM4 5.500h8M4 8.500h8M4 11.500h8" /></svg>
        </div>
        <div className="w-[49px] flex justify-center">
          <svg width="17" height="18" viewBox="0 0 17 18" fill="none" stroke="#666"><path d="M.500.500h16v17H.500zM6 .500V9h5V.500" /></svg>
        </div>
        <div className="w-[8px] h-[2px] bg-[#555] ml-[9px]" />
        <div className="ml-[8px] w-[124px] h-px bg-[#a6a6a6] flex items-center"><div className="ml-[60px] w-[6px] h-[14px] bg-[#6a6a6a] shrink-0" /></div>
        <div className="ml-[8px] w-[10px] text-[17px] leading-none text-[#555] text-center">+</div>
        <span className="ml-[15px] w-[50px]">100%</span>
      </div>
      {/* task bar peeking in */}
      <div className="h-[9px] shrink-0 flex bg-[#26343c]">
        <div className="w-[60px]" />
        <div className="w-[429px] bg-[#f1f1f1] border-t border-[#c6c6c6]" />
        <div className="ml-[543px] w-[143px] bg-[#5d6a70]" />
      </div>
      <Watermark />
      <Overlay />
      <FillMenu />
      <svg width="1920" height="1039" viewBox="0 0 1920 1039" className="absolute inset-0 pointer-events-none">
        <g fill="#ff3b3b">
          <path d="M1667 128l26-1 49 31-56-11z" />
          <path d="M1675 195l13 20-5-2 12 109-20-109-7 4z" />
        </g>
      </svg>
    </div>
  )
}
